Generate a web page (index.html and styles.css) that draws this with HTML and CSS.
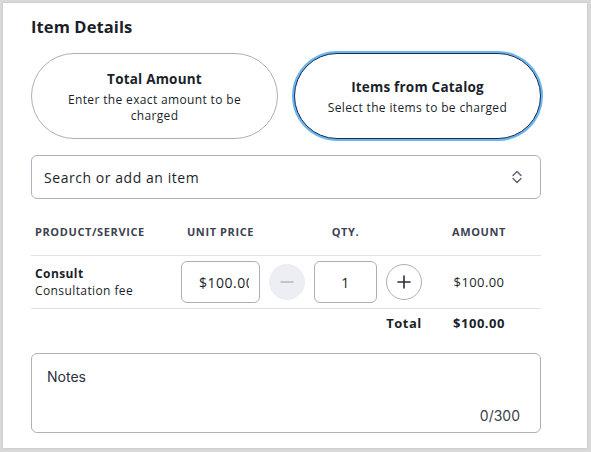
FILE: index.html
```html
<!DOCTYPE html>
<html lang="en">

<head>
    <meta charset="UTF-8">
    <meta name="viewport" content="width=device-width, initial-scale=1.0">
    <title>Item Details</title>
    <link rel="stylesheet" href="styles.css">
</head>

<body>
    <div class="card">
        <!-- section title -->
        <h2 class="title">Item Details</h2>

        <!-- charge type choice -->
        <div class="modes">
            <button class="mode">
                <span class="mode-name">Total Amount</span>
                <span class="mode-desc">Enter the exact amount to be charged</span>
            </button>
            <button class="mode active">
                <span class="mode-name">Items from Catalog</span>
                <span class="mode-desc">Select the items to be charged</span>
            </button>
        </div>

        <!-- item search -->
        <div class="search">
            <span class="search-text">Search or add an item</span>
            <svg class="chevrons" width="14" height="18" viewBox="0 0 14 18" fill="none" stroke="#5b6170" stroke-width="1.4" stroke-linecap="round" stroke-linejoin="round">
                <path d="M3 7.5 L7 3.5 L11 7.5" />
                <path d="M3 10.5 L7 14.5 L11 10.5" />
            </svg>
        </div>

        <!-- items table -->
        <div class="table">
            <div class="row head">
                <div class="col-product">Product/Service</div>
                <div class="col-price">Unit Price</div>
                <div></div>
                <div class="col-qty">Qty.</div>
                <div></div>
                <div class="col-amount">Amount</div>
            </div>
            <div class="row item">
                <div class="col-product">
                    <div class="prod-name">Consult</div>
                    <div class="prod-desc">Consultation fee</div>
                </div>
                <input class="field price" type="text" value="$100.00">
                <button class="round minus" disabled>
                    <svg width="16" height="16" viewBox="0 0 16 16"><path d="M2 8 H14" stroke="#b3b8c4" stroke-width="1.6" stroke-linecap="round" /></svg>
                </button>
                <input class="field qty" type="text" value="1">
                <button class="round plus">
                    <svg width="16" height="16" viewBox="0 0 16 16"><path d="M2 8 H14 M8 2 V14" stroke="#2a2f3a" stroke-width="1.6" stroke-linecap="round" /></svg>
                </button>
                <div class="col-amount">$100.00</div>
            </div>
            <div class="row total">
                <div></div>
                <div></div>
                <div></div>
                <div></div>
                <div class="total-label">Total</div>
                <div class="col-amount">$100.00</div>
            </div>
        </div>

        <!-- notes -->
        <div class="notes">
            <span class="notes-label">Notes</span>
            <span class="notes-count">0/300</span>
        </div>
    </div>
</body>

</html>
```

FILE: styles.css
```css
/* page */
body {
    margin: 0;
    background-color: #d9d9d9;
    font-family: "Open Sans", "Liberation Sans", sans-serif;
    color: #1b1f2a;
}

.card {
    margin: 3px;
    width: 556px;
    height: 433px;
    padding: 12px 0 0 28px;
    background-color: #fff;
    box-shadow: 0 0 2px rgba(0, 0, 0, 0.12);
}

.title {
    margin: 0;
    font-size: 16.5px;
    line-height: 24px;
    font-weight: 700;
    letter-spacing: 0.1px;
}

/* charge type pills */
.modes {
    display: flex;
    gap: 16px;
    margin-top: 14px;
    width: 510px;
}

.mode {
    flex: 1;
    height: 86px;
    display: flex;
    flex-direction: column;
    align-items: center;
    justify-content: center;
    padding: 0 30px;
    background: #fff;
    border: 1px solid #a9afbd;
    border-radius: 43px;
    font-family: inherit;
    color: #1b1f2a;
    cursor: pointer;
}

.mode.active {
    border: 1.5px solid #1d2b4c;
    box-shadow: 0 0 0 2px #68b5f0;
}

.mode-name {
    font-size: 13.5px;
    font-weight: 700;
    line-height: 20px;
    letter-spacing: 0.2px;
}

.mode-desc {
    margin-top: 3px;
    font-size: 12px;
    line-height: 16px;
    letter-spacing: 0.35px;
}

/* search select */
.search {
    box-sizing: border-box;
    display: flex;
    align-items: center;
    justify-content: space-between;
    margin-top: 16px;
    width: 510px;
    height: 44px;
    padding: 0 16px 0 12px;
    border: 1px solid #aab1bf;
    border-radius: 6px;
    font-size: 14px;
    letter-spacing: 0.55px;
}

/* table */
.table {
    width: 510px;
    margin-top: 16px;
}

.row {
    display: grid;
    grid-template-columns: 141px 79px 36px 63px 36px 1fr;
    column-gap: 9px;
    align-items: center;
    border-bottom: 1px solid #dfe2e7;
}

.row.head {
    height: 32px;
    padding-bottom: 8px;
    font-size: 11px;
    font-weight: 700;
    text-transform: uppercase;
    letter-spacing: 0.6px;
    color: #3c4252;
}

.col-product {
    padding-left: 4px;
}

.col-price,
.col-qty {
    text-align: center;
}

.col-amount {
    text-align: center;
    padding-right: 14px;
}

.row.item {
    height: 52px;
    font-size: 12px;
    letter-spacing: 0.4px;
}

.prod-name {
    font-weight: 700;
    line-height: 16px;
}

.prod-desc {
    line-height: 17px;
}

.row.item .col-amount {
    font-size: 13px;
}

.field {
    box-sizing: border-box;
    width: 100%;
    height: 42px;
    border: 1px solid #a9afbd;
    border-radius: 6px;
    font-family: inherit;
    font-size: 14px;
    letter-spacing: 0.5px;
    color: #1b1f2a;
    outline: none;
}

.field.price {
    padding: 0 10px 0 17px;
}

.field.qty {
    text-align: center;
}

.round {
    width: 36px;
    height: 36px;
    padding: 0;
    display: flex;
    align-items: center;
    justify-content: center;
    border-radius: 50%;
    background: #fff;
    border: 1px solid #a9afbd;
}

.round.minus {
    background: #eceef3;
    border-color: #eceef3;
}

.row.total {
    height: 28px;
    border-bottom: none;
    font-size: 13px;
    font-weight: 700;
    letter-spacing: 0.5px;
}

.total-label {
    text-align: center;
}

/* notes box */
.notes {
    box-sizing: border-box;
    display: flex;
    flex-direction: column;
    justify-content: space-between;
    margin-top: 16px;
    width: 510px;
    height: 80px;
    padding: 14px 20px 8px 15px;
    border: 1px solid #aab1bf;
    border-radius: 6px;
    font-family: Inter, "Liberation Sans", sans-serif;
    font-size: 14px;
    color: #2b303b;
}

.notes-count {
    align-self: flex-end;
    color: #3b404b;
}
```
